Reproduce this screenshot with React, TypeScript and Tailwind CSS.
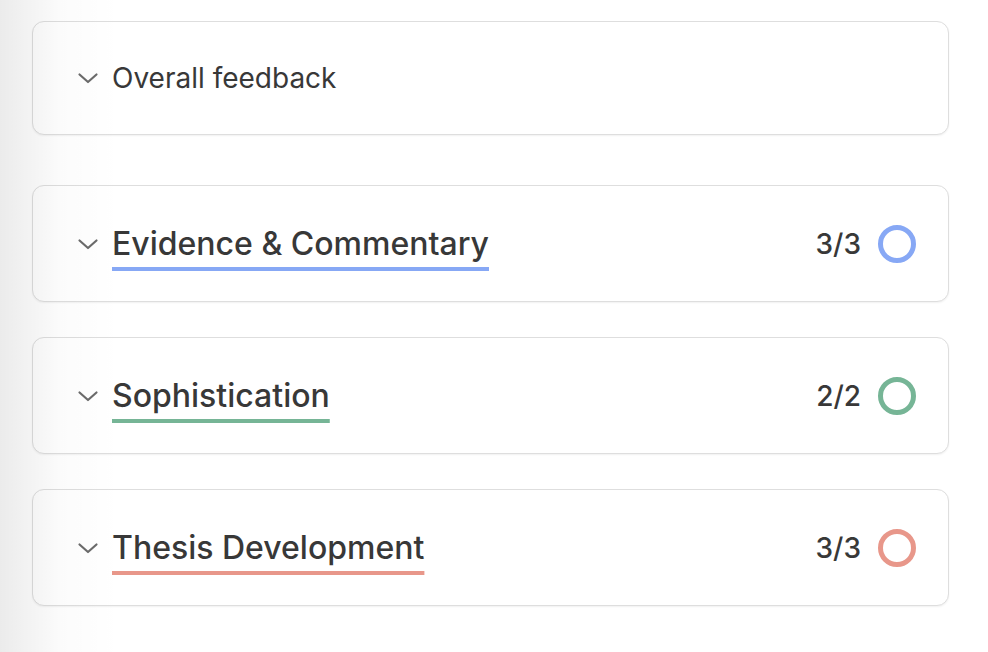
const sections = [
  { title: 'Evidence & Commentary', score: '3/3', line: 'decoration-[#87a8f5]', ring: 'border-[#87a8f5]' },
  { title: 'Sophistication', score: '2/2', line: 'decoration-[#76b596]', ring: 'border-[#76b596]' },
  { title: 'Thesis Development', score: '3/3', line: 'decoration-[#e8978a]', ring: 'border-[#e8978a]' },
];

function Chevron() {
  return (
    <svg width="22" height="12" viewBox="0 0 22 12" fill="none" className="shrink-0">
      <path d="M2.5 2.5 L11 10 L19.5 2.5" stroke="#6b6b6b" strokeWidth="2.2" strokeLinecap="round" strokeLinejoin="round" />
    </svg>
  );
}

export default function App() {
  return (
    <div className="relative w-[988px] h-[652px] overflow-hidden bg-white font-['Inter','Liberation_Sans',sans-serif] text-[#383838]">
      <div className="flex flex-col pl-[32px] pr-[39px] pt-[21px]">
        <div className="h-[114px] rounded-[12px] border-[1.5px] border-[#dedede] bg-white shadow-[0_1px_2px_rgba(0,0,0,0.06)] flex items-center gap-[13px] pl-[44px]">
          <Chevron />
          <span className="text-[28px] leading-none">Overall feedback</span>
        </div>

        <div className="flex flex-col gap-[35px] mt-[50px]">
          {sections.map((s) => (
            <div
              key={s.title}
              className="h-[117px] rounded-[12px] border-[1.5px] border-[#dedede] bg-white shadow-[0_1px_2px_rgba(0,0,0,0.06)] flex items-center pl-[44px] pr-[32px]"
            >
              <div className="flex items-center gap-[13px] flex-1">
                <Chevron />
                <span
                  className={`text-[32px] font-medium leading-none underline decoration-[3.5px] underline-offset-[12px] [text-decoration-skip-ink:none] ${s.line}`}
                >
                  {s.title}
                </span>
              </div>
              <span className="text-[28px] font-medium mr-[17px]">{s.score}</span>
              <div className={`w-[38px] h-[38px] rounded-full border-[5px] ${s.ring}`} />
            </div>
          ))}
        </div>
      </div>
      <div className="pointer-events-none absolute inset-y-0 left-0 w-[120px] bg-gradient-to-r from-[rgba(0,0,0,0.08)] via-[rgba(0,0,0,0.015)] to-transparent" />
    </div>
  );
}
